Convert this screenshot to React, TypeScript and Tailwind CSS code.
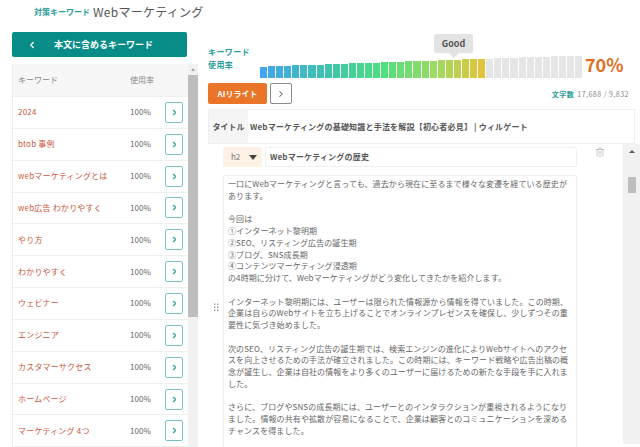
import React from 'react';
import { ChevronLeft, ChevronRight, Trash2 } from 'lucide-react';

const keywords = [
  '2024',
  'btob 事例',
  'webマーケティングとは',
  'web広告 わかりやすく',
  'やり方',
  'わかりやすく',
  'ウェビナー',
  'エンジニア',
  'カスタマーサクセス',
  'ホームページ',
  'マーケティング 4つ',
];

const body = `一口にWebマーケティングと言っても、過去から現在に至るまで様々な変遷を経ている歴史が
あります。

今回は
①インターネット黎明期
②SEO、リスティング広告の誕生期
③ブログ、SNS成長期
④コンテンツマーケティング浸透期
の4時期に分けて、Webマーケティングがどう変化してきたかを紹介します。

インターネット黎明期には、ユーザーは限られた情報源から情報を得ていました。この時期、
企業は自らのWebサイトを立ち上げることでオンラインプレゼンスを確保し、少しずつその重
要性に気づき始めました。

次のSEO、リスティング広告の誕生期では、検索エンジンの進化によりWebサイトへのアクセ
スを向上させるための手法が確立されました。この時期には、キーワード戦略や広告出稿の概
念が誕生し、企業は自社の情報をより多くのユーザーに届けるための新たな手段を手に入れま
した。

さらに、ブログやSNSの成長期には、ユーザーとのインタラクションが重視されるようになり
ました。情報の共有や拡散が容易になることで、企業は顧客とのコミュニケーションを深める
チャンスを得ました。`;

const stops: [number, number[]][] = [
  [0, [66, 165, 240]],
  [0.3, [62, 196, 170]],
  [0.55, [78, 224, 126]],
  [0.8, [160, 218, 96]],
  [1, [226, 196, 60]],
];

function barColor(t: number) {
  for (let i = 1; i < stops.length; i++) {
    if (t <= stops[i][0]) {
      const [a, ca] = stops[i - 1];
      const [b, cb] = stops[i];
      const k = (t - a) / (b - a);
      const c = ca.map((v, j) => Math.round(v + (cb[j] - v) * k));
      return `rgb(${c[0]},${c[1]},${c[2]})`;
    }
  }
  return 'rgb(226,196,60)';
}

const bars = Array.from({ length: 40 }, (_, i) => ({
  height: 11.5 + (i / 39) * 11,
  color: i < 28 ? barColor(i / 27) : '#e6e6e6',
}));

function GripDots() {
  return (
    <svg width="5" height="9" viewBox="0 0 5 9" fill="#9a9a9a">
      {[0.5, 3.5, 6.5].map((y) => (
        <React.Fragment key={y}>
          <rect x="0" y={y} width="1.4" height="1.6" />
          <rect x="3" y={y} width="1.4" height="1.6" />
        </React.Fragment>
      ))}
    </svg>
  );
}

export default function App() {
  return (
    <div className="w-[640px] h-[447px] overflow-hidden bg-white text-[#555] font-['Noto_Sans_CJK_JP','Noto_Sans',sans-serif]">
      <div className="flex items-center h-[24px] pl-[34px]">
        <span className="text-[8px] font-bold text-[#2a9d9a]">対策キーワード</span>
        <span className="ml-[3px] text-[12px] tracking-[0.3px] text-[#555]">Webマーケティング</span>
      </div>

      <div className="flex">
        <div className="ml-[12px] mt-[8px] w-[186px] shrink-0">
          <div className="flex items-center w-[175px] h-[25px] rounded-[2px] bg-[#078c88] text-white">
            <ChevronLeft size={10} strokeWidth={3} className="ml-[15px]" />
            <span className="ml-[17px] text-[9px] font-bold">本文に含めるキーワード</span>
          </div>

          <div className="relative mt-[7px] h-[400px] border-l border-[#eeeeee] pr-[10px]">
            <div className="flex items-center h-[33px] bg-[#f7f7f7] text-[8px] text-[#888] border-b border-[#eeeeee]">
              <span className="ml-[5px] w-[112px]">キーワード</span>
              <span>使用率</span>
            </div>
            {keywords.map((k) => (
              <div key={k} className="flex items-center h-[31.85px] border-b border-[#eeeeee]">
                <span className="ml-[5px] w-[112px] whitespace-nowrap text-[8px] tracking-[0.2px] text-[#c8583a]">{k}</span>
                <span className="w-[35px] text-[8px] tracking-[0.1px] text-[#666]">100%</span>
                <span className="flex items-center justify-center w-[18px] h-[21px] rounded-[2px] border border-[#79c4c4] text-[#2a9d9a]">
                  <ChevronRight size={9} strokeWidth={3} />
                </span>
              </div>
            ))}
            <div className="absolute top-0 right-0 bottom-0 w-[10px] bg-[#f1f1f1]">
              <div className="mx-auto mt-[4px] w-0 h-0 border-x-[2.5px] border-x-transparent border-b-[3px] border-b-[#a8a8a8]" />
              <div className="mt-[4px] h-[242px] bg-[#bdbdbd]" />
            </div>
          </div>
        </div>

        <div className="relative ml-[10px] flex-1 min-w-0">
          <div className="flex h-[56px]">
            <div className="pt-[22px] w-[52px] text-[8px] font-bold leading-[12.5px] text-[#2a9d9a] tracking-[0.4px]">
              <div>キーワード</div>
              <div>使用率</div>
            </div>
            <div className="relative w-[322px] flex items-end gap-[1px] h-[54px]">
              {bars.map((b, i) => (
                <div key={i} className="flex-1" style={{ height: b.height, backgroundColor: b.color }} />
              ))}
              <div className="absolute left-[174px] top-[10px] flex items-center justify-center w-[39px] h-[19px] rounded-[2px] bg-[#e3e3e3] text-[9px] font-bold text-[#555]">
                Good
                <div className="absolute -bottom-[5px] left-[15px] w-0 h-0 border-x-[5px] border-x-transparent border-t-[5px] border-t-[#e3e3e3]" />
              </div>
            </div>
            <div className="ml-[3px] mt-[24px] h-[32px] text-[18px] font-bold leading-[32px] text-[#e07020]">70%</div>
          </div>

          <div className="flex items-center mt-[3px] h-[21px] pr-[11px]">
            <div className="flex items-center justify-center w-[59px] h-[21px] rounded-[2px] bg-[#ea7428] text-[8px] font-bold text-white">
              AIリライト
            </div>
            <div className="ml-[3px] flex items-center justify-center w-[22px] h-[21px] rounded-[2px] border border-[#8a8a8a] text-[#666]">
              <ChevronRight size={10} strokeWidth={2.5} />
            </div>
            <div className="ml-auto pt-[1px] text-[7px] text-[#888] tracking-[0.5px]">
              <span className="font-bold text-[#2a9d9a] mr-[3px]">文字数</span>17,688 / 9,832
            </div>
          </div>

          <div className="flex items-stretch mt-[5px] h-[35px] w-[427px] border border-[#eeeeee]">
            <div className="flex items-center justify-center w-[39px] bg-[#f5f5f5] text-[8px] font-bold text-[#555]">タイトル</div>
            <div className="flex items-center pl-[2px] whitespace-nowrap text-[8px] font-bold tracking-[0.2px] text-[#555]">
              Webマーケティングの基礎知識と手法を解説【初心者必見】 | ウィルゲート
            </div>
          </div>

          <div className="relative h-[300px]">
            <div className="flex items-start pt-[3px] pl-[15px]">
              <div className="flex items-center w-[39px] h-[20px] rounded-[2px] bg-[#fdf1e6] pl-[8px] text-[8px] text-[#777]">
                h2
                <span className="ml-[9px] w-0 h-0 border-x-[4px] border-x-transparent border-t-[5px] border-t-[#444]" />
              </div>
              <div className="flex items-center ml-[3px] w-[312px] h-[20px] rounded-[2px] border border-[#f0f0f0] pl-[4px] text-[8px] font-bold tracking-[0.2px] text-[#555]">
                Webマーケティングの歴史
              </div>
              <Trash2 size={10} strokeWidth={1.5} className="ml-[18px] text-[#aaa]" />
            </div>
            <div className="flex items-start">
              <div className="mt-[136px] ml-[6px] w-[9px] shrink-0">
                <GripDots />
              </div>
              <div className="mt-[8px] w-[354px] h-[300px] rounded-[2px] border border-[#f0f0f0] px-[4px] pt-[2px] whitespace-pre text-[8px] leading-[11.75px] tracking-[0.1px] text-[#666]">
                {body}
              </div>
            </div>
            <div className="absolute right-0 top-0 bottom-0 w-[17px] bg-[#f1f1f1]">
              <div className="mx-auto mt-[6px] w-0 h-0 border-x-[3px] border-x-transparent border-b-[3px] border-b-[#555]" />
              <div className="mx-auto mt-[24px] w-[8px] h-[16px] bg-[#bdbdbd]" />
            </div>
          </div>
        </div>
      </div>
    </div>
  );
}
